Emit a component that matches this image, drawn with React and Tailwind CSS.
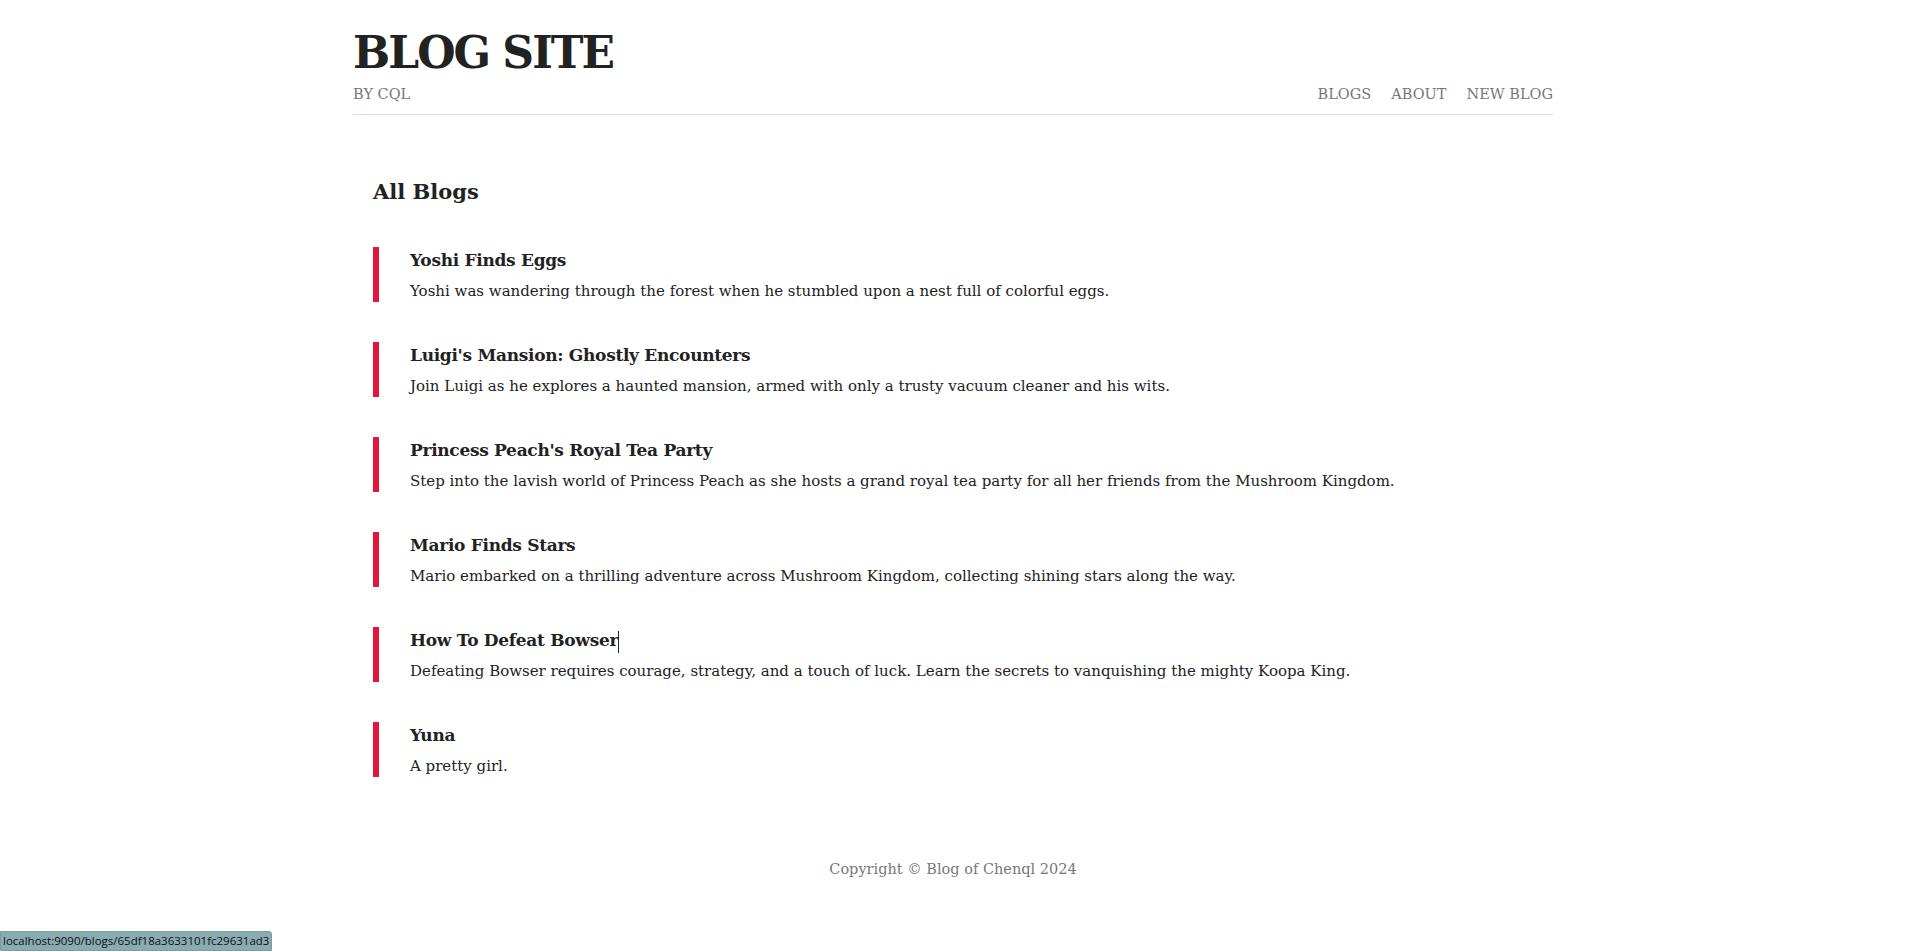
import React from 'react';

const blogs = [
  {
    id: 1,
    title: 'Yoshi Finds Eggs',
    snippet: 'Yoshi was wandering through the forest when he stumbled upon a nest full of colorful eggs.'
  },
  {
    id: 2,
    title: "Luigi's Mansion: Ghostly Encounters",
    snippet: 'Join Luigi as he explores a haunted mansion, armed with only a trusty vacuum cleaner and his wits.'
  },
  {
    id: 3,
    title: "Princess Peach's Royal Tea Party",
    snippet: 'Step into the lavish world of Princess Peach as she hosts a grand royal tea party for all her friends from the Mushroom Kingdom.'
  },
  {
    id: 4,
    title: 'Mario Finds Stars',
    snippet: 'Mario embarked on a thrilling adventure across Mushroom Kingdom, collecting shining stars along the way.'
  },
  {
    id: 5,
    title: 'How To Defeat Bowser',
    snippet: 'Defeating Bowser requires courage, strategy, and a touch of luck. Learn the secrets to vanquishing the mighty Koopa King.',
    caret: true
  },
  {
    id: 6,
    title: 'Yuna',
    snippet: 'A pretty girl.'
  }
];

const App = () => {
  return (
    <div className="min-h-screen bg-white text-[#222] font-['DejaVu_Serif',serif]">
      <div className="max-w-[1200px] mx-auto">
        {/* Header */}
        <nav className="flex items-end justify-between border-b border-[#ddd] pt-[24px] pb-[10px]">
          <div>
            <h1 className="text-[44px] leading-[58px] font-bold tracking-[-2px] text-[#222]">BLOG SITE</h1>
            <p className="text-[14.5px] leading-[20px] text-[#777] mt-[2px]">BY CQL</p>
          </div>
          <div className="flex gap-[20px] text-[14.5px] leading-[20px] text-[#777]">
            <a href="#">BLOGS</a>
            <a href="#">ABOUT</a>
            <a href="#">NEW BLOG</a>
          </div>
        </nav>

        {/* Content */}
        <div className="px-[20px] pt-[62px]">
          <h2 className="text-[21px] leading-[30px] font-bold mb-[40px]">All Blogs</h2>
          <div className="flex flex-col gap-[40px]">
            {blogs.map((blog) => (
              <a
                key={blog.id}
                href="#"
                className="block border-l-[6px] border-[#e1163c] pl-[31px] h-[55px]"
              >
                <h3 className="text-[17px] leading-[26px] font-bold tracking-[-0.3px]">
                  {blog.title}
                  {blog.caret && <span className="inline-block w-px h-[22px] bg-[#222] align-middle" />}
                </h3>
                <p className="text-[15px] leading-[28px] mt-[4px]">{blog.snippet}</p>
              </a>
            ))}
          </div>
        </div>

        {/* Footer */}
        <footer className="text-center text-[14.5px] leading-[20px] text-[#777] mt-[82px] pb-[40px]">
          Copyright © Blog of Chenql 2024
        </footer>
      </div>

      {/* Status bar */}
      <div className="fixed left-0 bottom-0 bg-[#8aabb0] text-[#111] text-[11.5px] leading-[18px] px-[2px] rounded-tr-[3px] font-['Open_Sans',sans-serif] border border-[#7a9ba0]">
        localhost:9090/blogs/65df18a3633101fc29631ad3
      </div>
    </div>
  );
};

export default App;
